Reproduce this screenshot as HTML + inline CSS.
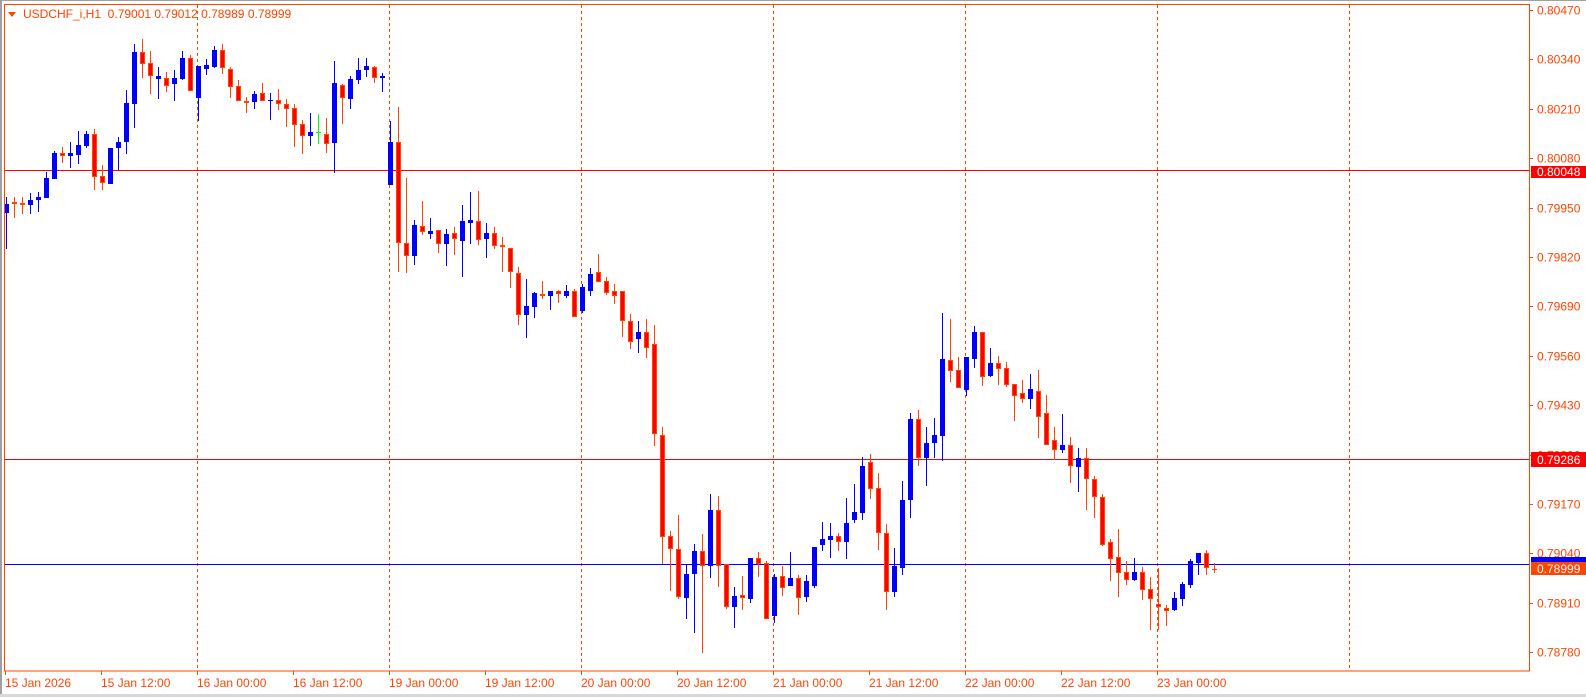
<!DOCTYPE html>
<html><head><meta charset="utf-8"><style>
html,body{margin:0;padding:0;background:#fff;width:1586px;height:697px;overflow:hidden}
svg{display:block}
text{font-family:"Liberation Sans",sans-serif;font-size:12px}
</style></head><body>
<svg id="s" width="1586" height="697" xmlns="http://www.w3.org/2000/svg">
<rect x="0" y="0" width="1586" height="697" fill="#fff"/>
<rect x="0" y="0" width="2" height="697" fill="#a0a0a0"/>
<rect x="0" y="0" width="1586" height="1" fill="#a0a0a0"/>
<rect x="0" y="694" width="1586" height="3" fill="#d8d8d8"/>
<g id="grid"></g>
<line x1="4" y1="170.5" x2="1529" y2="170.5" stroke="#ff0000" stroke-width="1"/>
<line x1="4" y1="459.5" x2="1529" y2="459.5" stroke="#ff0000" stroke-width="1"/>
<line x1="4" y1="564.5" x2="1529" y2="564.5" stroke="#0000ff" stroke-width="1"/>
<g id="c"></g>
<rect x="4.5" y="4.5" width="1525" height="666.5" fill="none" stroke="#ff4500" stroke-width="1"/>
<polygon points="8,12 16,12 12,17" fill="#ff4500"/>
<text x="23" y="18" fill="#ff4500" style="white-space:pre">USDCHF_i,H1  0.79001 0.79012 0.78989 0.78999</text>
<g id="ax"></g>
</svg>
<script>
var d=[
["b",197,204,213,249],["r",197,202,203,218],["r",197,203,204,214],["b",193,200,205,214],["b",192,197,200,212],
["b",172,178,198,198],["b",151,153,179,179],["r",147,153,156,163],["b",142,153,156,168],["b",131,145,155,164],
["b",131,134,146,148],["r",129,134,177,190],["r",165,176,183,190],["b",148,148,184,184],["b",137,142,148,170],
["b",90,103,142,154],["b",44,52,104,128],["r",39,52,64,78],["r",51,63,76,94],["b",67,76,79,99],
["r",72,78,86,92],["b",70,78,84,101],["b",51,58,79,80],["r",55,58,91,91],["b",66,66,98,121],
["b",59,65,69,75],["b",46,50,67,68],["r",44,50,68,74],["r",67,69,87,98],["r",80,86,101,101],
["r",97,101,102,113],["b",91,94,102,109],["r",83,93,101,101],["b",93,100,101,120],["r",89,100,104,110],
["r",99,104,109,127],["r",104,108,125,147],["r",120,124,136,154],["b",113,132,136,146],["g",114,132,132,144],
["r",118,134,144,153],["b",61,83,143,173],["r",84,85,98,124],["b",76,79,99,109],["b",58,70,80,84],
["b",58,66,70,77],["r",66,67,78,83],["b",73,76,78,92],["b",121,142,185,185],["r",107,142,243,272],
["r",178,243,256,273],["b",220,225,256,265],["r",201,226,232,235],["b",218,231,234,239],["r",230,230,244,253],
["b",229,234,244,266],["r",227,233,239,255],["b",205,221,241,277],["b",192,220,223,244],["r",191,221,240,245],
["b",223,233,239,258],["r",227,233,246,249],["r",237,245,247,272],["r",248,248,272,288],["r",267,273,315,325],
["b",279,306,315,338],["b",292,293,307,318],["r",281,294,295,299],["b",291,291,296,310],["r",290,291,294,303],
["b",285,291,296,298],["r",289,291,317,317],["b",284,287,311,313],["b",268,274,291,296],["r",254,272,282,282],
["r",277,281,293,295],["r",284,291,296,304],["r",291,291,321,337],["r",314,321,342,349],["b",321,332,339,353],
["r",319,332,348,358],["r",325,344,434,446],["r",427,435,537,564],["r",531,536,549,591],["r",515,549,597,599],
["b",564,574,598,619],["b",544,551,574,633],["r",534,551,566,653],["b",494,510,566,578],["r",496,510,566,587],
["r",564,564,607,609],["b",587,596,607,628],["r",576,595,598,610],["b",558,558,599,603],["r",552,558,564,577],
["r",561,563,619,619],["b",574,577,616,623],["r",566,576,588,596],["b",552,578,586,586],["r",575,578,598,615],
["b",575,581,597,602],["b",547,547,586,588],["b",522,539,545,551],["b",523,536,540,558],["r",533,536,542,551],
["b",498,523,542,559],["b",484,512,520,523],["b",457,466,513,520],["r",454,462,489,499],["r",473,488,533,550],
["r",524,533,592,610],["b",548,566,592,597],["b",481,500,568,575],["b",413,419,500,518],["r",410,419,458,466],
["b",427,443,458,486],["b",418,435,443,458],["b",313,359,436,461],["r",319,360,371,382],["r",357,370,388,388],
["b",357,357,390,396],["b",326,332,359,368],["r",332,332,377,386],["b",348,363,376,377],["r",356,363,369,385],
["r",362,368,385,387],["r",384,384,396,421],["r",380,393,399,403],["b",374,389,399,409],["r",370,391,417,438],
["r",395,413,445,445],["r",427,440,450,460],["b",414,445,450,453],["r",437,445,466,483],["b",448,458,467,492],
["r",448,458,479,510],["r",476,479,497,518],["r",494,497,545,546],["r",539,542,559,581],["r",529,557,573,597],
["r",561,572,580,585],["b",558,572,580,581],["r",567,572,590,600],["r",577,589,599,630],["r",568,604,607,630],
["r",605,608,611,626],["b",592,598,610,611],["b",582,584,599,606],["b",559,561,585,588],["b",553,553,563,575],
["r",550,553,568,575],["x",563,569,569,573]
];
var h="";
for(var i=0;i<d.length;i++){
 var c=d[i],x=Math.round(5.7+8*i),t=c[0];
 var wc=t=="b"?"#0000ff":(t=="g"?"#00ff00":"#ff4500");
 h+='<line x1="'+(x+0.5)+'" y1="'+c[1]+'" x2="'+(x+0.5)+'" y2="'+c[4]+'" stroke="'+wc+'" stroke-width="1"/>';
 if(t=="x"){h+='<line x1="'+(x-2)+'" y1="'+(c[2]+0.5)+'" x2="'+(x+3)+'" y2="'+(c[2]+0.5)+'" stroke="#ff4500"/>';continue;}
 var bh=c[3]-c[2];
 if(bh<1){h+='<line x1="'+(x-2)+'" y1="'+(c[2]+0.5)+'" x2="'+(x+3)+'" y2="'+(c[2]+0.5)+'" stroke="'+wc+'"/>';}
 else if(t=="b"){h+='<rect x="'+(x-2)+'" y="'+c[2]+'" width="5" height="'+bh+'" fill="#0000ff"/>';}
 else {h+='<rect x="'+(x-1.5)+'" y="'+(c[2]+0.5)+'" width="4" height="'+Math.max(bh-1,1)+'" fill="#ff0000" stroke="#ff4500" stroke-width="1"/>';}
}
document.getElementById("c").innerHTML=h;
var g="";
[197.5,389.5,581.5,773.5,965.5,1157.5,1349.5].forEach(function(x){g+='<line x1="'+x+'" y1="5" x2="'+x+'" y2="671" stroke="#ff4500" stroke-dasharray="3,3"/>';});
document.getElementById("grid").innerHTML=g;
var a="";
var pl=["0.80470","0.80340","0.80210","0.80080","0.79950","0.79820","0.79690","0.79560","0.79430","0.79300","0.79170","0.79040","0.78910","0.78780"];
for(var k=0;k<pl.length;k++){var y=Math.round(10+49.4*k);a+='<line x1="1530" y1="'+(y+0.5)+'" x2="1533" y2="'+(y+0.5)+'" stroke="#ff4500"/><text x="1537" y="'+(y+4.5)+'" fill="#ff4500">'+pl[k]+'</text>';}
var tl=["15 Jan 2026","15 Jan 12:00","16 Jan 00:00","16 Jan 12:00","19 Jan 00:00","19 Jan 12:00","20 Jan 00:00","20 Jan 12:00","21 Jan 00:00","21 Jan 12:00","22 Jan 00:00","22 Jan 12:00","23 Jan 00:00"];
for(var k=0;k<tl.length;k++){var x=5+96*k;a+='<line x1="'+(x+0.5)+'" y1="671" x2="'+(x+0.5)+'" y2="675" stroke="#ff4500"/><text x="'+x+'" y="687" fill="#ff4500">'+tl[k]+'</text>';}
a+='<rect x="1531" y="166" width="55" height="12" fill="#ff0000"/><text x="1537" y="176" fill="#fff">0.80048</text>';
a+='<rect x="1531" y="452" width="55" height="15" fill="#ff0000"/><text x="1537" y="464" fill="#fff">0.79286</text>';
a+='<rect x="1531" y="557" width="55" height="5" fill="#0000ff"/><rect x="1531" y="562" width="55" height="13" fill="#ff4500"/><text x="1537" y="573" fill="#fff">0.78999</text>';
document.getElementById("ax").innerHTML=a;
</script>
</body></html>
